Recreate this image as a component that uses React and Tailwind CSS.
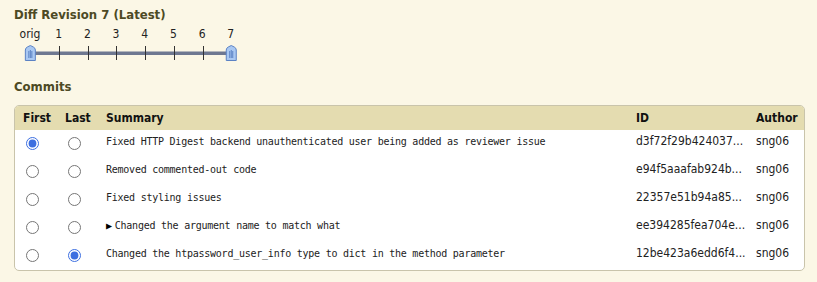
import React from "react"

const commits = [
    { summary: "Fixed HTTP Digest backend unauthenticated user being added as reviewer issue", id: "d3f72f29b424037...", first: true },
    { summary: "Removed commented-out code", id: "e94f5aaafab924b..." },
    { summary: "Fixed styling issues", id: "22357e51b94a85..." },
    { summary: "Changed the argument name to match what", id: "ee394285fea704e...", expand: true },
    { summary: "Changed the htpassword_user_info type to dict in the method parameter", id: "12be423a6edd6f4...", last: true },
]

const labels = ["orig", "1", "2", "3", "4", "5", "6", "7"]

const Handle = ({ x }) => (
    <g transform={`translate(${x - 5.5},0)`}>
        <path d="M0.5 15.5 V5 Q0.5 3 2.5 2 L5.5 0.5 L8.5 2 Q10.5 3 10.5 5 V15.5 Z" fill="#a9c8f2" stroke="#5b82c4" />
        <line x1="4" y1="6" x2="4" y2="13" stroke="#5b82c4" />
        <line x1="5.5" y1="5" x2="5.5" y2="13" stroke="#5b82c4" />
        <line x1="7" y1="6" x2="7" y2="13" stroke="#5b82c4" />
    </g>
)

const Slider = () => {
    const step = 28.7
    const xs = labels.map((_, i) => 14.35 + i * step)
    return (
        <div className="ml-[1.65px] w-[240px]">
            <div className="flex text-[12px] text-[#222] leading-[14px]">
                {labels.map((l) => (
                    <span key={l} className="w-[28.7px] shrink-0 text-center">{l}</span>
                ))}
            </div>
            <svg width="240" height="18" className="block mt-[4px]">
                <rect x={xs[0]} y="6.5" width={xs[7] - xs[0]} height="3.5" fill="#6e7891" />
                {xs.slice(1, 7).map((x) => (
                    <line key={x} x1={Math.round(x) + 0.5} y1="1" x2={Math.round(x) + 0.5} y2="15" stroke="#333" strokeWidth="1" />
                ))}
                <Handle x={xs[0]} />
                <Handle x={xs[7]} />
            </svg>
        </div>
    )
}

const App = () => {
    return (
        <div className="w-[817px] h-[282px] bg-[#fbf7e6] px-[14px] pt-[7px] font-['DejaVu_Sans_Condensed','Liberation_Sans',sans-serif] text-[#222]">
            <h2 className="text-[13px] font-bold text-[#4d4a24] leading-[16px]">Diff Revision 7 (Latest)</h2>
            <div className="mt-[4px]">
                <Slider />
            </div>

            <h2 className="mt-[16px] text-[13px] font-bold text-[#4d4a24] leading-[16px]">Commits</h2>

            <div className="mt-[10px] w-[791px] rounded-[5px] border border-[#c9c4ab] bg-white overflow-hidden">
                <div className="flex items-center h-[24px] bg-[#e4dcb0] text-[12px] font-bold text-[#111]">
                    <span className="w-[50px] pl-[8px]">First</span>
                    <span className="w-[41px]">Last</span>
                    <span className="w-[530px]">Summary</span>
                    <span className="w-[120px]">ID</span>
                    <span>Author</span>
                </div>
                {commits.map((c, i) => (
                    <div key={i} className="flex items-center h-[28px] pb-[2px] text-[12px]">
                        <span className="w-[50px] flex pl-[11px]">
                            <input type="radio" name={`first${i}`} defaultChecked={!!c.first} className="w-[13px] h-[13px] m-0 accent-[#3d6fe0]" />
                        </span>
                        <span className="w-[41px] flex pl-[3px]">
                            <input type="radio" name={`last${i}`} defaultChecked={!!c.last} className="w-[13px] h-[13px] m-0 accent-[#3d6fe0]" />
                        </span>
                        <span className="w-[530px] pb-[4px] font-['DejaVu_Sans_Mono',monospace] text-[10px] tracking-[-0.24px] text-[#222]">
                            {c.expand && <span className="text-[10px] text-black mr-[3px]">▶</span>}
                            {c.summary}
                        </span>
                        <span className="w-[120px] pb-[4px] text-[#222]">{c.id}</span>
                        <span className="pb-[4px] text-[#222]">sng06</span>
                    </div>
                ))}
            </div>
        </div>
    )
}

export default App
